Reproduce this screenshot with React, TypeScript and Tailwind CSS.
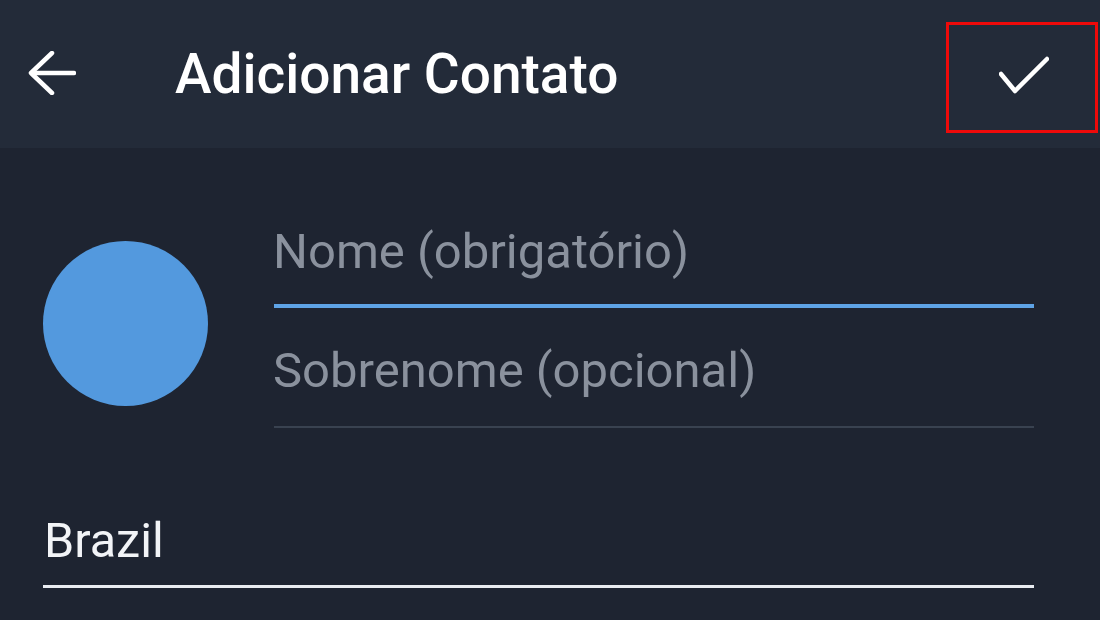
export default function App() {
  return (
    <main className="flex h-[620px] w-[1100px] flex-col overflow-hidden bg-[#1e2431] font-['Roboto',sans-serif]">
      <header className="flex h-[148px] shrink-0 items-start bg-[#232b39]">
        <button className="ml-[28px] mt-[51px] flex h-[44px] w-[48px] items-center justify-center">
          <svg width="48" height="44" viewBox="0 0 48 44" fill="none" stroke="#ffffff" strokeWidth="4.5" strokeLinecap="round" strokeLinejoin="round">
            <path d="M46 22H4" />
            <path d="M24 2L3 22L24 42" />
          </svg>
        </button>
        <h1 className="ml-[99px] mt-[42px] text-[55px] font-medium leading-[64px] text-white">Adicionar Contato</h1>
        <div className="ml-auto mr-[2px] mt-[22px] flex h-[111px] w-[152px] items-center justify-center border-[3px] border-[#ee0a0a] pb-[6px] pl-[3px]">
          <svg width="50" height="38" viewBox="0 0 50 38" fill="none" stroke="#ffffff" strokeWidth="4.5" strokeLinecap="round" strokeLinejoin="round">
            <path d="M2 18L16 35L48 3" />
          </svg>
        </div>
      </header>

      <section className="mt-[76px] flex items-start">
        <div className="ml-[43px] mt-[17px] h-[165px] w-[165px] shrink-0 rounded-full bg-[#5399de]" />
        <div className="ml-[66px] mr-[66px] flex flex-1 flex-col">
          <p className="-ml-[1px] h-[56px] text-[49px] leading-[56px] text-[#8a919d]">Nome (obrigatório)</p>
          <div className="mt-[24px] h-[4px] bg-[#5ea3e6]" />
          <p className="-ml-[1px] mt-[35px] h-[56px] text-[49px] leading-[56px] text-[#8a919d]">Sobrenome (opcional)</p>
          <div className="mt-[27px] h-[2px] bg-[#394250]" />
        </div>
      </section>

      <section className="ml-[43px] mr-[66px] mt-[85px] flex flex-col">
        <p className="ml-[1px] h-[56px] text-[48.5px] leading-[56px] text-[#f2f4f7]">Brazil</p>
        <div className="mt-[16px] h-[3px] bg-[#e9ecf1]" />
      </section>
    </main>
  )
}
